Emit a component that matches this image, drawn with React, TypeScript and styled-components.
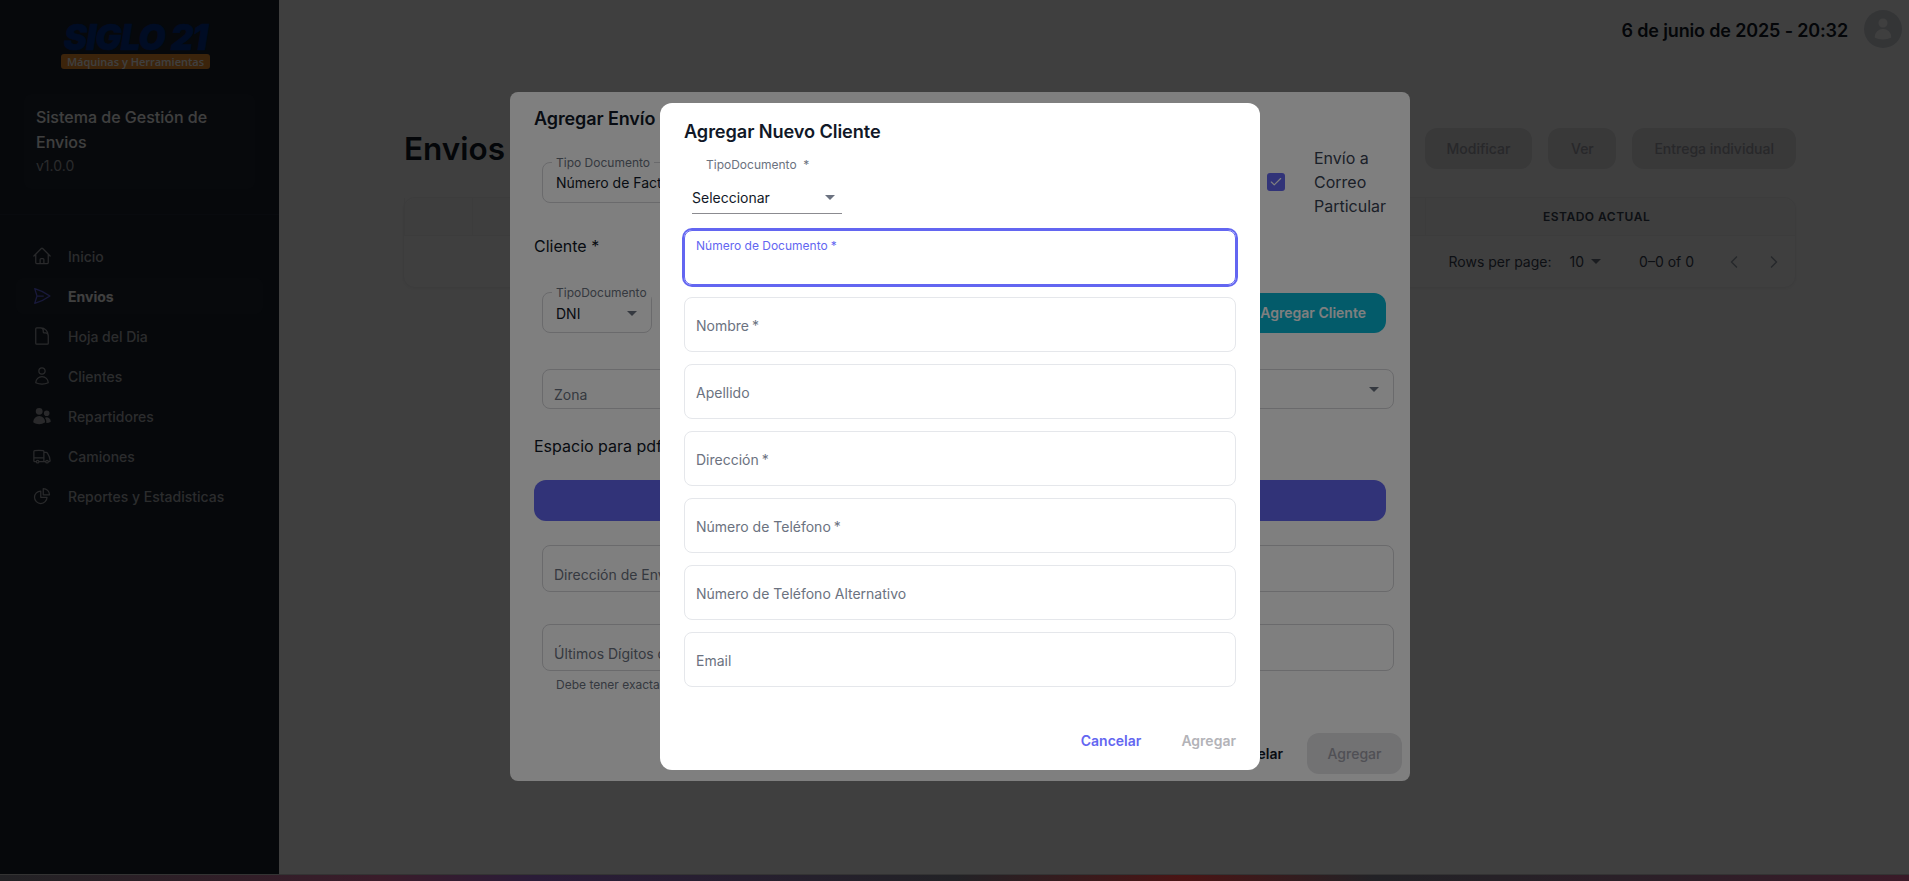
import React from "react";
import styled, { createGlobalStyle } from "styled-components";
import {
  HiOutlineHome,
  HiOutlinePaperAirplane,
  HiOutlineDocument,
  HiOutlineUser,
  HiUsers,
  HiOutlineTruck,
  HiOutlineChartPie,
  HiUser,
} from "react-icons/hi2";
import { LuChevronLeft, LuChevronRight, LuCheck } from "react-icons/lu";

const GlobalStyle = createGlobalStyle`
  * { box-sizing: border-box; }
  html, body { margin: 0; padding: 0; height: 881px; overflow: hidden; }
  body {
    background: #1f1f22;
    font-family: Inter, "Liberation Sans", sans-serif;
  }
`;

const Viewport = styled.div`
  position: relative;
  width: 1920px;
  height: 874px;
  display: flex;
  background: #ffffff;
  overflow: hidden;
`;

const BottomStrip = styled.div`
  height: 7px;
  width: 1909px;
  background: linear-gradient(90deg, #222225 0%, #3a1c2a 20%, #2a1c38 28%, #222226 50%, #4a1414 62%, #222226 72%, #2a2028 85%, #3a1a28 100%);
  border-top: 1px solid #333;
`;

const Sidebar = styled.aside`
  width: 279px;
  flex-shrink: 0;
  background: #18202c;
  display: flex;
  flex-direction: column;
`;

const LogoBlock = styled.div`
  height: 94px;
  padding: 24px 8px 0 0;
  display: flex;
  flex-direction: column;
  align-items: center;
`;

const LogoMark = styled.div`
  width: 149px;
  height: 27px;
  line-height: 27px;
  text-align: center;
  font-family: Inter, sans-serif;
  font-size: 35px;
  font-weight: 900;
  font-style: italic;
  letter-spacing: -1px;
  -webkit-text-stroke: 0.6px #003090;
  color: #003090;
  white-space: nowrap;
`;

const LogoBand = styled.div`
  margin-top: 3px;
  width: 149px;
  height: 15px;
  line-height: 15px;
  text-align: center;
  border-radius: 3px;
  background: #f0902f;
  color: #ffffff;
  font-family: "Open Sans", sans-serif;
  font-size: 11px;
  font-weight: 600;
  white-space: nowrap;
`;

const InfoCard = styled.div`
  margin: 0 24px;
  height: 95px;
  padding: 11px 12px;
  border-radius: 8px;
  background: #1e2632;
`;

const InfoTitle = styled.div`
  font-size: 16px;
  font-weight: 500;
  line-height: 25px;
  color: #ffffff;
`;

const InfoVersion = styled.div`
  margin-top: 1px;
  font-size: 14px;
  line-height: 20px;
  color: #a9acb2;
`;

const SideDivider = styled.div`
  margin-top: 25px;
  height: 1px;
  background: #222b38;
`;

const NavList = styled.nav`
  margin-top: 23px;
  padding: 0 16px;
  display: flex;
  flex-direction: column;
  gap: 4px;
`;

const NavItem = styled.a<{ $active?: boolean }>`
  height: 36px;
  padding-left: 16px;
  display: flex;
  align-items: center;
  gap: 16px;
  border-radius: 8px;
  font-size: 14px;
  font-weight: ${(p) => (p.$active ? 700 : 500)};
  color: ${(p) => (p.$active ? "#ffffff" : "#aeb1b7")};
  background: ${(p) => (p.$active ? "#1f2733" : "transparent")};

  svg {
    width: 20px;
    height: 20px;
    flex-shrink: 0;
    color: ${(p) => (p.$active ? "#6366f1" : "#a4a7ad")};
  }
`;

const Main = styled.main`
  flex: 1;
  padding: 0 124px 0 125px;
  background: #ffffff;
  color: #111827;
`;

const TopBar = styled.header`
  height: 58px;
  margin-right: -106px;
  display: flex;
  align-items: center;
  justify-content: flex-end;
  gap: 16px;
`;

const DateText = styled.span`
  margin-top: 2px;
  font-size: 18px;
  font-weight: 600;
  letter-spacing: -0.15px;
  color: #111827;
`;

const Avatar = styled.div`
  width: 38px;
  height: 38px;
  border-radius: 50%;
  background: #d1d5db;
  color: #ffffff;
  display: flex;
  align-items: center;
  justify-content: center;

  svg {
    width: 24px;
    height: 24px;
  }
`;

const PageHead = styled.div`
  margin-top: 70px;
  height: 41px;
  display: flex;
  align-items: center;
  justify-content: space-between;
`;

const PageTitle = styled.h1`
  margin: 0;
  font-size: 31.5px;
  font-weight: 600;
  color: #111827;
`;

const PageActions = styled.div`
  display: flex;
  gap: 16px;
`;

const GhostButton = styled.button`
  min-width: 68px;
  height: 41px;
  padding: 0 22px;
  border: none;
  border-radius: 12px;
  background: #e4e4e7;
  color: #a1a1aa;
  font-family: inherit;
  font-size: 14px;
  font-weight: 500;
`;

const TableCard = styled.section`
  margin: 28px 0 0 -1px;
  height: 91px;
  border: 1px solid #f0f0f2;
  border-radius: 12px;
  background: #ffffff;
  box-shadow: 0 1px 4px rgba(0, 0, 0, 0.06);
`;

const TableHead = styled.div`
  height: 38px;
  display: flex;
  background: #f9f9fa;
  border-radius: 12px 12px 0 0;
  border-bottom: 1px solid #f0f0f2;
`;

const HeadCell = styled.div<{ $width?: number; $indent?: number }>`
  flex: ${(p) => (p.$width ? `0 0 ${p.$width}px` : 1)};
  padding-left: ${(p) => p.$indent || 0}px;
  display: flex;
  align-items: center;
  border-left: 1px solid #f0f0f2;
  font-size: 12px;
  font-weight: 600;
  letter-spacing: 0.5px;
  color: #374151;
`;

const Pagination = styled.div`
  height: 51px;
  padding-right: 11px;
  display: flex;
  align-items: center;
  justify-content: flex-end;
  font-size: 14px;
  color: #374151;
`;

const PageSelect = styled.span`
  margin-left: 18px;
  display: flex;
  align-items: center;
  gap: 7px;
`;

const PageRange = styled.span`
  margin-left: 38px;
  margin-right: 30px;
`;

const PageArrows = styled.span`
  display: flex;
  gap: 20px;
  color: #9ca3af;

  svg {
    display: block;
    width: 20px;
    height: 20px;
  }
`;

const Caret = styled.i<{ $color?: string }>`
  display: block;
  width: 0;
  height: 0;
  flex-shrink: 0;
  border-left: 5px solid transparent;
  border-right: 5px solid transparent;
  border-top: 5px solid ${(p) => p.$color || "#6b7280"};
`;

const Backdrop = styled.div`
  position: absolute;
  inset: 0;
  padding-bottom: 1px;
  display: flex;
  align-items: center;
  justify-content: center;
  background: rgba(0, 0, 0, 0.5);
`;

const OuterModal = styled.div`
  width: 900px;
  height: 689px;
  padding: 16px 24px 9px;
  border-radius: 8px;
  background: #ffffff;
  color: #111827;
`;

const OuterTitle = styled.h2`
  margin: 0;
  font-size: 18px;
  line-height: 22px;
  font-weight: 600;
  letter-spacing: -0.1px;
`;

const RowFirst = styled.div`
  margin-top: 16px;
  height: 72px;
  display: flex;
  align-items: center;
  justify-content: space-between;
`;

const OutlineField = styled.div<{ $width?: string; $height?: number; $mt?: number }>`
  position: relative;
  margin-top: ${(p) => p.$mt || 0}px;
  margin-left: 8px;
  margin-right: ${(p) => (p.$width ? 0 : -8)}px;
  width: ${(p) => p.$width || "auto"};
  height: ${(p) => p.$height || 41}px;
  padding: 1px 14px 0 13px;
  display: flex;
  align-items: center;
  justify-content: space-between;
  border: 1px solid #d4d4d8;
  border-radius: 8px;
  font-size: 14px;
  color: #111827;
`;

const FloatLabel = styled.span`
  position: absolute;
  top: -7px;
  left: 9px;
  padding: 0 4px;
  background: #ffffff;
  font-size: 12px;
  line-height: 14px;
  color: #6b7280;
`;

const LowLabel = styled.span`
  padding-top: 10px;
  margin-left: -2px;
  font-size: 14px;
  color: #6b7280;
`;

const CheckGroup = styled.label`
  width: 119px;
  display: flex;
  align-items: center;
  gap: 29px;
  font-size: 16px;
  line-height: 24px;
  color: #374151;
`;

const CheckBox = styled.span`
  width: 18px;
  height: 18px;
  flex-shrink: 0;
  border-radius: 3px;
  background: #6366f1;
  color: #ffffff;
  display: flex;
  align-items: center;
  justify-content: center;

  svg {
    width: 14px;
    height: 14px;
  }
`;

const SectionLabel = styled.div<{ $mt: number }>`
  margin-top: ${(p) => p.$mt}px;
  font-size: 16px;
  line-height: 24px;
  color: #111827;
`;

const ClientRow = styled.div`
  margin-top: 34px;
  display: flex;
  align-items: center;
  justify-content: space-between;
`;

const TealButton = styled.button`
  width: 200px;
  height: 40px;
  padding: 0 20px 0 0;
  text-align: right;
  border: none;
  border-radius: 12px;
  background: #06b6d4;
  color: #ffffff;
  font-family: inherit;
  font-size: 14px;
  font-weight: 600;
`;

const WideButton = styled.button`
  display: block;
  width: 100%;
  height: 41px;
  margin-top: 22px;
  border: none;
  border-radius: 12px;
  background: #6366f1;
`;

const Helper = styled.div`
  margin: 6px 0 0 22px;
  font-size: 12px;
  line-height: 16px;
  color: #6b7280;
`;

const OuterFooter = styled.div`
  margin-top: 40px;
  margin-right: -16px;
  display: flex;
  align-items: center;
  justify-content: flex-end;
  gap: 24px;
`;

const TextAction = styled.button<{ $color: string }>`
  padding: 0;
  border: none;
  background: none;
  font-family: inherit;
  font-size: 14px;
  font-weight: 600;
  color: ${(p) => p.$color};
`;

const MutedButton = styled.button`
  width: 95px;
  height: 41px;
  border: none;
  border-radius: 12px;
  background: #e4e4e7;
  color: #a1a1aa;
  font-family: inherit;
  font-size: 14px;
  font-weight: 500;
`;

const InnerModal = styled.div`
  width: 600px;
  height: 667px;
  padding: 14px 24px 12px;
  border-radius: 12px;
  background: #ffffff;
`;

const InnerTitle = styled.h2`
  margin: 0;
  font-size: 18.2px;
  line-height: 28px;
  font-weight: 600;
  letter-spacing: -0.1px;
  color: #111827;
`;

const SelectWrap = styled.div`
  margin: 12px 0 0 8px;
  width: 150px;
`;

const SelectLabel = styled.div`
  padding-left: 14px;
  font-size: 12px;
  line-height: 16px;
  color: #6b7280;
`;

const SelectControl = styled.div`
  margin-top: 8px;
  height: 33px;
  display: flex;
  align-items: center;
  justify-content: space-between;
  padding-right: 7px;
  border-bottom: 1px solid #8b8b90;
  font-size: 14px;
  color: #111827;
`;

const FieldStack = styled.div`
  margin-top: 16px;
  display: flex;
  flex-direction: column;
  gap: 12px;
`;

const TextField = styled.div<{ $focused?: boolean }>`
  height: 55px;
  padding: ${(p) => (p.$focused ? "7px" : "3px")} 11px 0;
  display: flex;
  flex-direction: column;
  justify-content: ${(p) => (p.$focused ? "flex-start" : "center")};
  border: 1px solid ${(p) => (p.$focused ? "#6366f1" : "#e5e7eb")};
  border-radius: 8px;
  box-shadow: ${(p) => (p.$focused ? "0 0 0 2px #6366f1" : "none")};
  font-size: ${(p) => (p.$focused ? "12px" : "14px")};
  line-height: ${(p) => (p.$focused ? "16px" : "20px")};
  color: ${(p) => (p.$focused ? "#6366f1" : "#6b7280")};
`;

const Req = styled.span`
  margin-left: 3px;
`;

const InnerFooter = styled.div`
  margin-top: 35px;
  height: 36px;
  display: flex;
  align-items: center;
  justify-content: flex-end;
  gap: 40px;
`;

const navItems = [
  { label: "Inicio", icon: <HiOutlineHome /> },
  { label: "Envios", icon: <HiOutlinePaperAirplane />, active: true },
  { label: "Hoja del Dia", icon: <HiOutlineDocument /> },
  { label: "Clientes", icon: <HiOutlineUser /> },
  { label: "Repartidores", icon: <HiUsers /> },
  { label: "Camiones", icon: <HiOutlineTruck /> },
  { label: "Reportes y Estadisticas", icon: <HiOutlineChartPie /> },
];

const clientFields = [
  { label: "Número de Documento", required: true, focused: true },
  { label: "Nombre", required: true },
  { label: "Apellido" },
  { label: "Dirección", required: true },
  { label: "Número de Teléfono", required: true },
  { label: "Número de Teléfono Alternativo" },
  { label: "Email" },
];

export default function App() {
  return (
    <>
      <GlobalStyle />
      <Viewport>
        <Sidebar>
          <LogoBlock>
            <LogoMark>SIGLO 21</LogoMark>
            <LogoBand>Máquinas y Herramientas</LogoBand>
          </LogoBlock>
          <InfoCard>
            <InfoTitle>Sistema de Gestión de Envios</InfoTitle>
            <InfoVersion>v1.0.0</InfoVersion>
          </InfoCard>
          <SideDivider />
          <NavList>
            {navItems.map((item) => (
              <NavItem key={item.label} $active={item.active}>
                {item.icon}
                {item.label}
              </NavItem>
            ))}
          </NavList>
        </Sidebar>

        <Main>
          <TopBar>
            <DateText>6 de junio de 2025 - 20:32</DateText>
            <Avatar>
              <HiUser />
            </Avatar>
          </TopBar>
          <PageHead>
            <PageTitle>Envios</PageTitle>
            <PageActions>
              <GhostButton>Modificar</GhostButton>
              <GhostButton>Ver</GhostButton>
              <GhostButton>Entrega individual</GhostButton>
            </PageActions>
          </PageHead>
          <TableCard>
            <TableHead>
              <HeadCell $width={68} />
              <HeadCell />
              <HeadCell $width={370} $indent={117}>
                ESTADO ACTUAL
              </HeadCell>
            </TableHead>
            <Pagination>
              Rows per page:
              <PageSelect>
                10 <Caret />
              </PageSelect>
              <PageRange>0–0 of 0</PageRange>
              <PageArrows>
                <LuChevronLeft />
                <LuChevronRight />
              </PageArrows>
            </Pagination>
          </TableCard>
        </Main>

        <Backdrop>
          <OuterModal>
            <OuterTitle>Agregar Envío</OuterTitle>
            <RowFirst>
              <OutlineField $width="300px">
                <FloatLabel>Tipo Documento</FloatLabel>
                Número de Factura
              </OutlineField>
              <CheckGroup>
                <CheckBox>
                  <LuCheck />
                </CheckBox>
                Envío a Correo Particular
              </CheckGroup>
            </RowFirst>
            <SectionLabel $mt={16}>Cliente *</SectionLabel>
            <ClientRow>
              <OutlineField $width="110px">
                <FloatLabel>TipoDocumento</FloatLabel>
                DNI
                <Caret />
              </OutlineField>
              <TealButton>Agregar Cliente</TealButton>
            </ClientRow>
            <OutlineField $mt={36} $height={40}>
              <LowLabel>Zona</LowLabel>
              <Caret />
            </OutlineField>
            <SectionLabel $mt={25}>Espacio para pdf</SectionLabel>
            <WideButton />
            <OutlineField $mt={24} $height={47}>
              <LowLabel>Dirección de Envío</LowLabel>
            </OutlineField>
            <OutlineField $mt={32} $height={47}>
              <LowLabel>Últimos Dígitos de Factura</LowLabel>
            </OutlineField>
            <Helper>Debe tener exactamente 4 dígitos</Helper>
            <OuterFooter>
              <TextAction $color="#111827">Cancelar</TextAction>
              <MutedButton>Agregar</MutedButton>
            </OuterFooter>
          </OuterModal>
        </Backdrop>

        <Backdrop>
          <InnerModal>
            <InnerTitle>Agregar Nuevo Cliente</InnerTitle>
            <SelectWrap>
              <SelectLabel>TipoDocumento&nbsp;&nbsp;*</SelectLabel>
              <SelectControl>
                Seleccionar
                <Caret />
              </SelectControl>
            </SelectWrap>
            <FieldStack>
              {clientFields.map((field) => (
                <TextField key={field.label} $focused={field.focused}>
                  <span>
                    {field.label}
                    {field.required && <Req>*</Req>}
                  </span>
                </TextField>
              ))}
            </FieldStack>
            <InnerFooter>
              <TextAction $color="#6366f1">Cancelar</TextAction>
              <TextAction $color="#b3b3b8">Agregar</TextAction>
            </InnerFooter>
          </InnerModal>
        </Backdrop>
      </Viewport>
      <BottomStrip />
    </>
  );
}
